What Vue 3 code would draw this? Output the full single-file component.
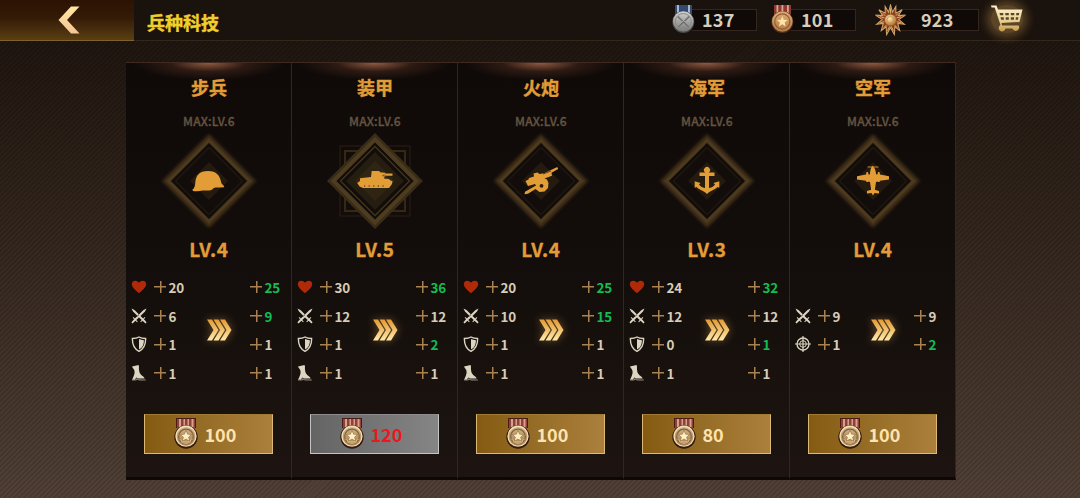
<script setup>
import { ref } from 'vue';

const currencies = ref([
  { icon: 'silver', amount: 137 },
  { icon: 'bronze', amount: 101 },
  { icon: 'sun', amount: 923 },
]);

// each stat: icon, current value, next value. null keeps the row empty
const troops = ref([
  {
    name: '步兵', icon: 'helmet', level: 4, cost: 100,
    stats: [['heart', 20, 25], ['swords', 6, 9], ['shield', 1, 1], ['boot', 1, 1]],
  },
  {
    name: '装甲', icon: 'tank', level: 5, cost: 120,
    stats: [['heart', 30, 36], ['swords', 12, 12], ['shield', 1, 2], ['boot', 1, 1]],
  },
  {
    name: '火炮', icon: 'cannon', level: 4, cost: 100,
    stats: [['heart', 20, 25], ['swords', 10, 15], ['shield', 1, 1], ['boot', 1, 1]],
  },
  {
    name: '海军', icon: 'anchor', level: 3, cost: 80,
    stats: [['heart', 24, 32], ['swords', 12, 12], ['shield', 0, 1], ['boot', 1, 1]],
  },
  {
    name: '空军', icon: 'plane', level: 4, cost: 100,
    stats: [null, ['swords', 9, 9], ['target', 1, 2], null],
  },
]);

const canAfford = (troop) => troop.cost <= currencies.value[1].amount;
</script>

<template>
  <div class="screen">
    <svg class="defs" width="0" height="0">
      <defs>
        <linearGradient id="gold" x1="0" y1="0" x2="0" y2="1">
          <stop offset="0" stop-color="#e29a35" />
          <stop offset="1" stop-color="#ffe9a8" />
        </linearGradient>
        <linearGradient id="cream" x1="0" y1="0" x2="0" y2="1">
          <stop offset="0" stop-color="#ffe6a0" />
          <stop offset="1" stop-color="#f6c596" />
        </linearGradient>
        <linearGradient id="cartGold" x1="0" y1="0" x2="0" y2="1">
          <stop offset="0" stop-color="#fff3cf" />
          <stop offset="0.6" stop-color="#e6cf92" />
          <stop offset="1" stop-color="#c79c4c" />
        </linearGradient>
        <linearGradient id="silverDisc" x1="0" y1="0" x2="0" y2="1">
          <stop offset="0" stop-color="#d2d2d0" />
          <stop offset="1" stop-color="#777775" />
        </linearGradient>
        <linearGradient id="bronzeDisc" x1="0" y1="0" x2="0" y2="1">
          <stop offset="0" stop-color="#e0ad78" />
          <stop offset="1" stop-color="#b07c48" />
        </linearGradient>
        <linearGradient id="priceDisc" x1="0" y1="0" x2="0" y2="1">
          <stop offset="0" stop-color="#cfb48c" />
          <stop offset="1" stop-color="#a88250" />
        </linearGradient>
        <radialGradient id="ball" cx="0.4" cy="0.35" r="0.7">
          <stop offset="0" stop-color="#ffeab5" />
          <stop offset="1" stop-color="#ad6c2a" />
        </radialGradient>
        <filter id="soft" x="-20%" y="-20%" width="140%" height="140%">
          <feGaussianBlur stdDeviation="1.5" />
        </filter>
      </defs>

      <symbol id="silver" viewBox="0 0 30 28">
        <path d="M7 0h17v9H7z" fill="#34496f" />
        <path d="M9 0h2v8H9zM20 0h2v8h-2z" fill="#a9b6cf" />
        <circle cx="15.3" cy="17" r="11" fill="#4a4947" />
        <circle cx="15.3" cy="16.5" r="10.3" fill="url(#silverDisc)" />
        <circle cx="15.3" cy="16.5" r="8" fill="none" stroke="#8b8a88" />
        <path d="M10 11.5l11 10M21 11.5l-11 10" stroke="#6d6c6a" stroke-width="1.8" />
        <path d="M10.5 11l11 10M20.5 11l-11 10" stroke="#c6c5c2" stroke-width="0.7" />
      </symbol>
      <symbol id="bronze" viewBox="0 0 30 28">
        <path d="M7 0h17v9H7z" fill="#8f3830" />
        <path d="M9.5 0h1.8v8H9.5zM14.5 0h1.8v8h-1.8zM20 0h1.8v8H20z" fill="#d9a494" />
        <circle cx="15.3" cy="17" r="11" fill="#54301b" />
        <circle cx="15.3" cy="16.5" r="10.3" fill="url(#bronzeDisc)" />
        <circle cx="15.3" cy="16.5" r="7.6" fill="none" stroke="#955d31" stroke-width="1.2" />
        <path d="M15.3 11l1.5 3.7 4 .3-3.1 2.5 1 3.9-3.4-2.1-3.4 2.1 1-3.9-3.1-2.5 4-.3z" fill="#ffe2a6" />
      </symbol>
      <symbol id="price" viewBox="0 0 24 31">
        <path d="M2 0h20v10H2z" fill="#4a1c16" />
        <path d="M3 1h18v10H3z" fill="#8d4238" />
        <path d="M5 1h2v8H5zM9.5 1H11v7H9.5zM13.5 1H15v7h-1.5zM17.5 1h2v8h-2z" fill="#d99e8e" />
        <circle cx="12" cy="19" r="11.7" fill="#351a10" />
        <circle cx="12" cy="18.2" r="10.6" fill="#f4e2b4" />
        <circle cx="12" cy="18.4" r="9.3" fill="url(#priceDisc)" />
        <circle cx="12" cy="18.4" r="7.3" fill="none" stroke="#86623a" stroke-width="1.2" />
        <path d="M5.5 21c3 4 10 4 13 0M7 23.5c3 2.500 7 2.500 10 0" fill="none" stroke="#e5cb98" stroke-width=".8" />
        <path d="M12 12.3l1.6 3.9 4.2.3-3.2 2.6 1.1 4.1-3.7-2.2-3.7 2.2 1.1-4.1-3.2-2.6 4.2-.3z" fill="#fff0c0" stroke="#8e683e" stroke-width=".6" />
      </symbol>
      <symbol id="sun" viewBox="-16 -16 32 32">
        <path
          d="M0-15.5L2-8 5.5-14 5.5-7 12-10.5 8-4.5 15.500-5 8.5-.5 14.5 4.5 7.5 3.5 9.5 11 4.5 7 4 15 0 8-4 15-4.5 7-9.5 11-7.5 3.5-14.5 4.5-8.5-.5-15.5-5-8-4.5-12-10.5-5.5-7-5.5-14-2-8z"
          fill="#8e3a20" stroke="#cfa568" stroke-width="1.1"
        />
        <path d="M0-12V6M-11-3.5L11 3M11-3.5L-11 3M-8-7L7 8M8-7L-7 8M-3 11L0 5l3 6" fill="none" stroke="#e0b16c" stroke-width="1" />
        <circle r="6.8" fill="#8d5522" />
        <circle r="5.8" fill="url(#ball)" />
        <circle r="3.6" fill="none" stroke="#c88d48" stroke-width=".7" />
      </symbol>

      <symbol id="heart" viewBox="0 0 16 16">
        <path d="M8 14.2C5 11.700.8 8.500.8 5 .8 1 6 .5 8 3.800c2-3.300 7.200-2.800 7.200 1.200 0 3.500-4.200 6.700-7.200 9.200z" fill="#b02a0a" />
      </symbol>
      <symbol id="swords" viewBox="0 0 16 16">
        <g fill="#ddd5c2">
          <path d="M.5.5l3 1.5 8.600 8.600 1.500-1.600.7.7-1.400 1.600 2.700 3-1.100 1.200-3-2.700-1.500 1.400-.7-.7 1.400-1.500L2 3.500z" />
          <path d="M15.5.5l-3 1.500-8.600 8.600L2.400 9l-.7.7 1.400 1.600-2.700 3 1.100 1.200 3-2.700L6 14.200l.7-.7L5.300 12 14 3.500z" />
        </g>
        <path d="M6.2 8.3l1.8-1.8" stroke="#17100d" stroke-width=".7" />
      </symbol>
      <symbol id="shield" viewBox="0 0 16 16">
        <path d="M8 1c2 1.200 4.500 1.500 6.600 1.500C14.800 9 13.200 12.700 8 15.300 2.800 12.700 1.200 9 1.400 2.500 3.500 2.500 6 2.200 8 1z" fill="none" stroke="#ddd5c2" stroke-width="1.4" />
        <path d="M8 3c1.500.8 3.200 1.100 4.900 1.200C12.800 9 11.500 11.700 8 13.400z" fill="#ddd5c2" />
      </symbol>
      <symbol id="boot" viewBox="0 0 16 16">
        <path d="M1 1.500L7.500 0c.8 1 .3 2.800.5 4.700.3 2.500.9 4 2.500 5.500 1.400 1.300 2.800 1.700 3.100 3.300H7l-1.800-.9-1.200 2.100H1C2.500 11.500 4 9 3.500 6 3.200 4.300 1.700 3.500 1 1.500z" fill="#ddd5c2" />
        <path d="M1 14.700h3.300l1.200-1.400 2 .9 7.300.2v1.100H8.500l-2.500-.8-1 .9H1z" fill="#8d8678" />
      </symbol>
      <symbol id="target" viewBox="0 0 16 16">
        <g fill="none" stroke="#ddd5c2">
          <circle cx="8" cy="8" r="6" stroke-width="1.3" />
          <circle cx="8" cy="8" r="3.3" stroke-width="1" />
          <path d="M8 0v16M0 8h16" stroke-width="1.2" />
        </g>
      </symbol>

      <symbol id="helmet" viewBox="-20 -20 40 40">
        <path d="M-16.5 8.5c2-1.200 2.500-3.500 2.800-7C-13-5.500-10-10-1-10 7.500-10 11-5.500 12.200 1.500c.3 2 2.800 2.500 3.100 4.700L10 6.500c-3 0-4.500-.3-6 1.300C2 10-1 9.500-4 9.500c-4 0-8 1-11 .7-1 0-1.500-.7-1.500-1.700z" />
      </symbol>
      <symbol id="tank" viewBox="-20 -20 40 40">
        <path d="M-15-2.800L-4-4l.7-6h7.500l.8 1.200 5 .5.5.8h7v2.200h-7.500L9-2.500l5 .5 1.500 1.500 2 .5-.5 3-3 4h-26l-3.500-1.500-2.300-3.500 2.800-2z" />
        <path d="M-11 5h23" stroke="#2b2111" stroke-width="1.1" stroke-dasharray="1.2 3.4" />
        <path d="M9.5-6.500l-2 1.200 4 .6" fill="none" stroke="#6f4a1a" stroke-width=".8" />
      </symbol>
      <symbol id="cannon" viewBox="-20 -20 40 40">
        <path d="M-15.5 0l3-1.500.5-1.500L-7-4.500l-.5-3 4-1 2 1.500 4.500-.8L16.300-14l.9 2-6.700 3.800.5 3L3.500-2.500 6-1.500 7.500 2 7 7 3.500 10.500-1.500 11-5.500 8-13 12.800l-3.500.4.500-2.500L-5 4.500l-1-1.500-7 2z" />
        <circle cx=".5" cy="4.8" r="1.9" fill="#2b1a0c" />
        <path d="M2-7l8-3" stroke="#2b1a0c" stroke-width=".7" />
      </symbol>
      <symbol id="anchor" viewBox="-20 -20 40 40">
        <path d="M-1.8-8.500A3 3 0 1 1 1.800-8.500h5.700v3.400H2V7c3-.5 5-2 6-3.500L6.500 2 12.300.3v6.500L10.500 6C8 9 3.500 9.500 0 13-3.500 9.500-8 9-10.500 6l-1.800.8V.3L-6.500 2-8 3.500C-7 5-5 6.500-2 7V-5.100h-5.500v-3.400z" />
      </symbol>
      <symbol id="plane" viewBox="-20 -20 40 40">
        <path d="M0-14.500c1.500 1 2.400 3 2.700 5.500l.5 2.500 1.300-.3.5-2.200h1.500l.5 2.500L16-4.800v3.300L7-.2 6.500 1H5L4.500.5 3 1 1.900 8.700 6 10v2.500L1.500 12 0 14.500-1.500 12-6 12.500V10l4.100-1.300L-3 1-4.500.5-5 1h-1.500L-7-.2l-9-1.300v-3.300l9-1.700.5-2.500H-5l.5 2.500 1.300.1.500-3.600c.3-2.500 1.200-4.500 2.700-5.500z" />
        <path d="M-5.500-14h11" stroke="#dc9932" stroke-width=".9" />
      </symbol>
    </svg>

    <header class="topbar">
      <button class="back">
        <svg width="22" height="28" viewBox="0 0 22 28">
          <path d="M.5 14L13 .5h8.500L9 14l12.500 13.500H13z" fill="url(#cream)" />
        </svg>
      </button>
      <h1>兵种科技</h1>
      <div class="wallet">
        <div v-for="c in currencies" :key="c.icon" class="currency" :class="c.icon">
          <svg class="medal"><use :href="'#' + c.icon" /></svg>
          <span class="amount">{{ c.amount }}</span>
        </div>
        <button class="cart">
          <svg width="32" height="28" viewBox="0 0 32 28">
            <path
              fill-rule="evenodd"
              d="M0 .5h5.500L7 4.500h24.500L28.500 17l-18 1 .5 2.500h16.500a3.400 3.400 0 1 1-6 3h-7a3.400 3.400 0 1 1-5-3.500L3.700 2.500H.5zM8.500 8l.5 2.200h3.300V8zM14.300 8v2.200h3.500V8zM19.800 8v2.200h3.500V8zM25.300 8l-.2 2.200h2.700l.5-2.200zM9.500 12.200l.6 2.600h2.900l-.3-2.600zM14.700 12.200v2.600h3.100v-2.600zM19.800 12.200v2.600h3.100l.2-2.600zM24.900 12.200l-.3 2.600h2.300l.5-2.600z"
              fill="url(#cartGold)"
            />
          </svg>
        </button>
      </div>
    </header>

    <main class="troops">
      <section v-for="troop in troops" :key="troop.name" class="troop">
        <h2>{{ troop.name }}</h2>
        <p class="max">MAX:LV.6</p>
        <svg class="emblem" width="100" height="100" viewBox="-50 -50 100 100">
          <g v-if="troop.level === 5">
            <path d="M-35-35h70v70h-70z" fill="none" stroke="#2b2012" />
            <path d="M-30-30h60v60h-60z" fill="none" stroke="#352914" stroke-width="2" />
            <path d="M0-48L48 0 0 48-48 0z" fill="#3a2d18" />
            <path d="M0-41.5L41.5 0 0 41.5-41.5 0z" fill="#120d0a" stroke="#4d3c1f" stroke-width="4" />
            <path d="M0-34.5L34.5 0 0 34.5-34.5 0z" fill="none" stroke="#43351c" stroke-width="1.3" />
            <path d="M0-29L29 0 0 29-29 0z" fill="#251d10" />
            <path d="M0-20L20 0 0 20-20 0z" fill="#302513" />
          </g>
          <g v-else>
            <path d="M0-43L43 0 0 43-43 0z" fill="none" stroke="#3f2e15" stroke-width="5.5" filter="url(#soft)" />
            <path d="M0-40.5L40.5 0 0 40.5-40.5 0z" fill="#120d0a" stroke="#4b3a1e" stroke-width="3.2" />
            <path d="M0-33.5L33.5 0 0 33.5-33.5 0z" fill="none" stroke="#2a2011" />
            <path d="M0-19L19 0 0 19-19 0z" fill="#241a0d" />
          </g>
          <use :href="'#' + troop.icon" x="-20" y="-20" width="40" height="40" fill="#e39d37" />
        </svg>
        <p class="level">LV.{{ troop.level }}</p>

        <div class="compare">
          <ul class="now">
            <li v-for="(stat, i) in troop.stats" :key="i">
              <template v-if="stat">
                <svg class="stat-icon"><use :href="'#' + stat[0]" /></svg>
                <i class="plus"></i>
                <span>{{ stat[1] }}</span>
              </template>
            </li>
          </ul>
          <svg class="arrows" width="25" height="22" viewBox="0 0 25 22">
            <g fill="url(#gold)">
              <path d="M0 .5h5L11.500 11 5 21.500H0L6.500 11z" />
              <path d="M6.5.5h5L18 11l-6.500 10.500h-5L13 11z" />
              <path d="M13 .5h5L24.500 11 18 21.500h-5L19.500 11z" />
            </g>
          </svg>
          <ul class="next">
            <li v-for="(stat, i) in troop.stats" :key="i">
              <template v-if="stat">
                <i class="plus"></i>
                <span :class="{ better: stat[2] > stat[1] }">{{ stat[2] }}</span>
              </template>
            </li>
          </ul>
        </div>

        <button class="upgrade" :class="{ locked: !canAfford(troop) }">
          <svg width="24" height="31"><use href="#price" /></svg>
          <span>{{ troop.cost }}</span>
        </button>
      </section>
    </main>
  </div>
</template>

<style>
body {
  margin: 0;
  background: #1a120d;
}
</style>

<style scoped>
.screen {
  height: 498px;
  overflow: hidden;
  font-family: "Noto Sans CJK SC", "Noto Sans", sans-serif;
  font-weight: 700;
  background:
    repeating-linear-gradient(135deg, rgba(0, 0, 0, 0.1) 0 1.4px, rgba(255, 255, 255, 0.012) 1.4px 3.54px),
    linear-gradient(#19110c 0, #20160f 70px, #33261e 260px, #4e3e33 498px);
}

.defs {
  display: block;
}

h1,
h2,
p,
ul {
  margin: 0;
  padding: 0;
  list-style: none;
}

button {
  padding: 0;
  border: none;
  background: none;
  font: inherit;
}

.topbar {
  display: flex;
  align-items: center;
  height: 41px;
  box-sizing: border-box;
  border-bottom: 1px solid #33271b;
  background: #1a120d;
}

.back {
  display: flex;
  align-items: center;
  align-self: stretch;
  width: 134px;
  margin-bottom: -1px;
  padding-left: 58px;
  border-bottom: 1px solid #80602c;
  background: linear-gradient(#2b1203, #341b07 45%, #5a3f12);
}

h1 {
  margin-left: 13px;
  padding-top: 3px;
  font-size: 18px;
  line-height: 24px;
  color: #f0cf2c;
  -webkit-text-stroke: 0.4px #f0cf2c;
}

.wallet {
  display: flex;
  align-items: center;
  margin-left: auto;
  padding-right: 57px;
}

.currency {
  display: flex;
  align-items: center;
  width: 85px;
  height: 40px;
  margin-right: 14px;
  background:
    linear-gradient(#0f0a08, #0f0a08) 20px 10px / 64px 20px no-repeat,
    linear-gradient(#34261c, #34261c) 20px 9px / 65px 22px no-repeat;
}

.currency.sun {
  width: 104px;
  margin-left: 5px;
  margin-right: 12px;
  background:
    linear-gradient(#0f0a08, #0f0a08) 20px 10px / 83px 20px no-repeat,
    linear-gradient(#34261c, #34261c) 20px 9px / 84px 22px no-repeat;
}

.medal {
  width: 30px;
  height: 28px;
  margin-top: -2px;
  margin-left: -4px;
}

.sun .medal {
  width: 31px;
  height: 32px;
  margin-top: 0;
  margin-left: 0;
}

.amount {
  margin-top: -3px;
  margin-left: 4px;
  font-size: 18px;
  line-height: 24px;
  letter-spacing: 0.2px;
  color: #d8cdb9;
}

.sun .amount {
  margin-left: 15px;
}

.cart {
  display: flex;
  margin-top: -2px;
  border-radius: 50%;
  background: rgba(232, 178, 92, 0.32);
  box-shadow: 0 0 9px 5px rgba(232, 178, 92, 0.28);
}

.troops {
  display: flex;
  width: 830px;
  margin: 21px 0 0 126.4px;
}

.troop {
  display: flex;
  flex-direction: column;
  align-items: center;
  width: 166px;
  height: 418px;
  box-sizing: border-box;
  border-top: 1px solid #40291f;
  border-right: 1px solid #33261e;
  border-bottom: 3px solid #0d0705;
  background:
    radial-gradient(ellipse 76px 17px at 50% 0, rgba(175, 110, 78, 0.8), rgba(110, 60, 42, 0.32) 50%, transparent),
    linear-gradient(#0f0a08, #130e0b 50%, #1d1411);
}

h2 {
  margin-top: 12px;
  font-size: 18px;
  line-height: 24px;
  color: #e39d37;
  -webkit-text-stroke: 0.4px #e39d37;
}

.max {
  margin-top: 13px;
  font-size: 12px;
  line-height: 18px;
  font-weight: 500;
  letter-spacing: 0.15px;
  color: #655440;
  -webkit-text-stroke: 0.3px #655440;
}

.emblem {
  margin-top: 1px;
}

.level {
  margin-top: 5px;
  font-size: 19px;
  line-height: 26px;
  letter-spacing: 0.6px;
  color: #e39d37;
  -webkit-text-stroke: 0.3px #e39d37;
}

.compare {
  display: flex;
  align-items: center;
  align-self: stretch;
  margin-top: 10.4px;
  padding-left: 5px;
}

.compare li {
  display: flex;
  align-items: center;
  height: 28.8px;
  font-size: 13.4px;
  line-height: 20px;
  color: #d8cdb9;
}

.now {
  width: 76px;
}

.stat-icon {
  width: 16px;
  height: 16px;
  margin-right: 7px;
}

.plus {
  width: 12px;
  height: 12px;
  margin-right: 2px;
  background:
    linear-gradient(#a98250, #a98250) center / 12px 1.5px no-repeat,
    linear-gradient(#a98250, #a98250) center / 1.5px 12px no-repeat;
}

.arrows {
  filter: drop-shadow(0 0 4px rgba(230, 170, 80, 0.45));
}

.next {
  margin-left: 18px;
}

.compare .better {
  color: #12bd54;
}

.upgrade {
  display: flex;
  align-items: center;
  width: 129px;
  height: 40px;
  margin-top: 26px;
  padding-left: 29px;
  box-sizing: border-box;
  border: 1px solid #dcb978;
  border-top-color: #a17a34;
  background: linear-gradient(90deg, #855b12, #99702a 55%, #ab7f3c);
  font-size: 18px;
  color: #ffe3ae;
}

.upgrade span {
  margin-left: 6px;
  line-height: 24px;
}

.upgrade.locked {
  border-color: #c4c4c4;
  border-top-color: #8c8c8c;
  background: linear-gradient(90deg, #646464, #858585);
  color: #ee1620;
}
</style>
